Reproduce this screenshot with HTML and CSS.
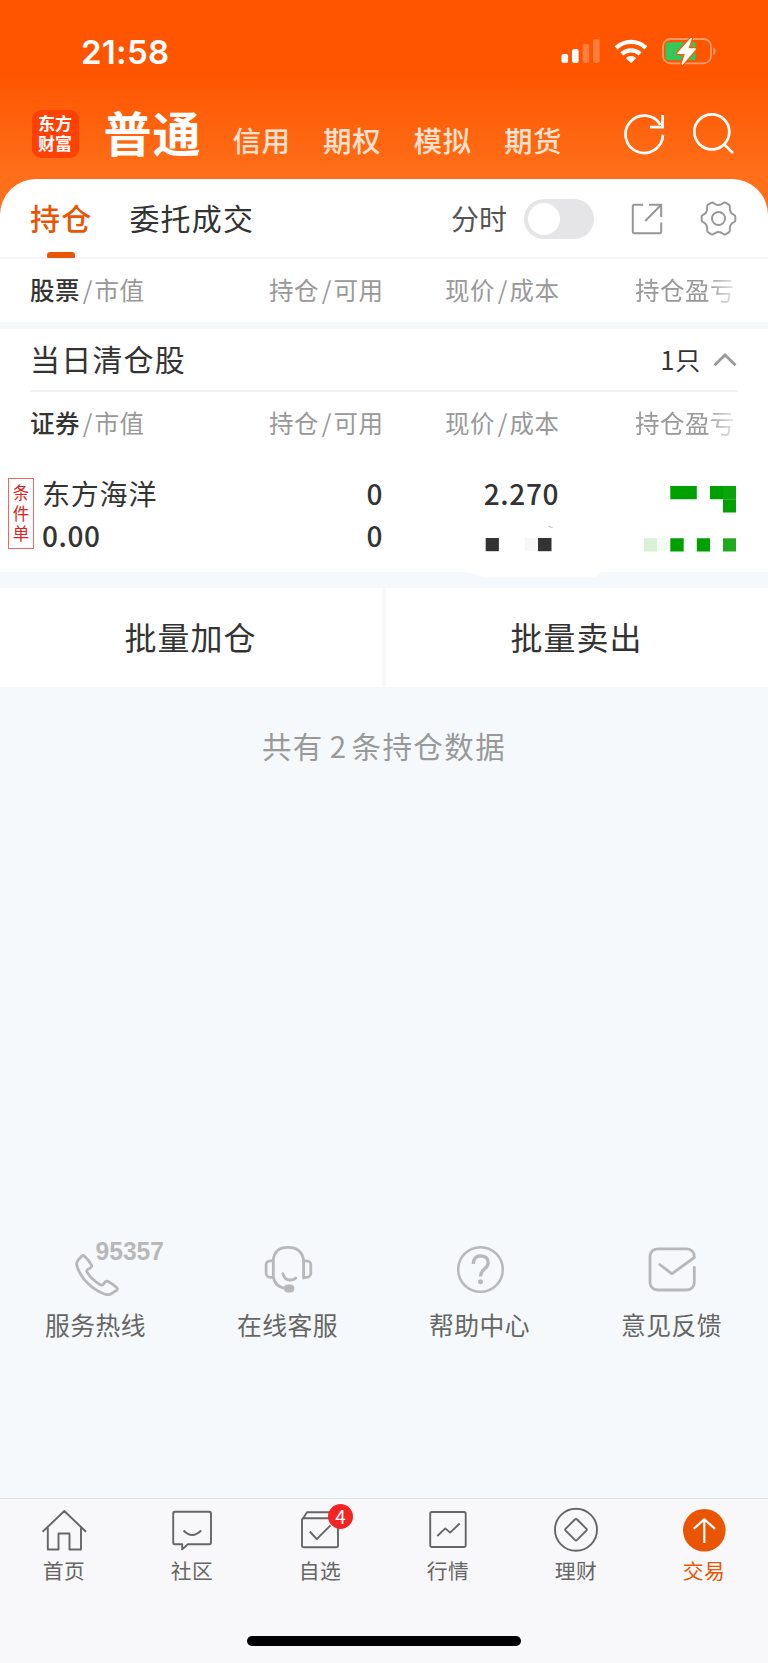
FILE: index.html
```html
<!DOCTYPE html>
<html lang="zh-CN">
<head>
<meta charset="utf-8">
<title>普通交易 - 持仓</title>
<link rel="stylesheet" href="styles.css">
</head>
<body>
<div class="screen">
  <header class="top">
    <div class="status">
      <span class="clock">21:58</span>
      <svg class="status-icons" width="156" height="28" viewBox="0 0 156 28">
        <g fill="#fff">
          <rect x="1.5" y="16" width="6.6" height="9" rx="2"/>
          <rect x="12" y="11" width="6.6" height="14" rx="2"/>
          <g opacity=".24"><rect x="22.6" y="6" width="6.6" height="19" rx="2"/><rect x="33" y="1" width="6.6" height="24" rx="2"/></g>
          <path d="M71 25.2l-5.2-5.1a7.6 7.6 0 0 1 10.4 0z"/>
        </g>
        <g fill="none" stroke="#fff" stroke-width="4.3">
          <path d="M61.8 15.9a13.6 13.6 0 0 1 18.4 0"/>
          <path d="M56.1 9.9a21.6 21.6 0 0 1 29.8 0"/>
        </g>
        <rect x="103" y="1" width="48" height="24.4" rx="7.5" fill="none" stroke="#fff" stroke-opacity=".42" stroke-width="1.8"/>
        <path d="M153.3 9.4c3 .9 3 6.7 0 7.6z" fill="#fff" opacity=".45"/>
        <path d="M109 4.200h26.500v18H109a3.500 3.500 0 0 1-3.500-3.500v-11a3.500 3.500 0 0 1 3.500-3.500z" fill="#34c759"/>
        <path d="M131.200 .4L118 15.200h7.800L122.200 26.200L135.200 11h-7.800z" fill="none" stroke="#ff5a05" stroke-width="4" stroke-linejoin="round"/>
        <path d="M131.200 .4L118 15.200h7.800L122.200 26.200L135.200 11h-7.800z" fill="#fff" stroke="#fff" stroke-width="1.400" stroke-linejoin="round"/>
      </svg>
    </div>
    <div class="account">
      <div class="logo">东方<br>财富</div>
      <h1 class="account-current">普通</h1>
      <nav class="account-tabs"><span>信用</span><span>期权</span><span>模拟</span><span>期货</span></nav>
      <svg class="account-actions" width="112" height="44" viewBox="0 0 112 44" fill="none" stroke="#fff" stroke-width="2.7">
        <path d="M39.900 22.800a18.700 18.700 0 1 1-2.600-10M39.600 3v12.200H27"/>
        <circle cx="88.800" cy="19.800" r="17.500"/><path d="M101 32.200l9 8.900"/>
      </svg>
    </div>
  </header>

  <main class="sheet">
    <div class="tabs">
      <span class="tab tab-active">持仓</span>
      <span class="tab">委托成交</span>
      <span class="minute">分时</span>
      <span class="toggle"><i></i></span>
      <svg class="share" width="32" height="32" viewBox="0 0 32 32" fill="none" stroke="#979797" stroke-width="2">
        <path d="M12.200 1.800H3.300A1.500 1.500 0 0 0 1.800 3.300v25.400a1.500 1.500 0 0 0 1.500 1.500H28.700a1.500 1.500 0 0 0 1.500-1.500V19.500M18 1.800h12.200v12.200M30 2L14.200 18"/>
      </svg>
      <svg class="gear" width="37" height="37" viewBox="0 0 38 38" fill="none" stroke="#979797" stroke-width="2" stroke-linejoin="round">
        <circle cx="19" cy="19" r="6.700"/>
        <path d="M11.400 2.900Q13 2 14.200 3.400Q19 7 23.800 3.400Q25 2 26.600 2.900L29.600 4.700Q31 5.800 30.600 7.400Q30.300 13.400 34.900 15.200Q36.300 15.700 36.300 17.200V20.800Q36.300 22.300 34.900 22.800Q30.300 24.600 30.600 30.600Q31 32.200 29.600 33.300L26.600 35.100Q25 36 23.800 34.600Q19 31 14.200 34.600Q13 36 11.400 35.100L8.400 33.300Q7 32.200 7.400 30.600Q7.700 24.600 3.100 22.800Q1.700 22.300 1.700 20.800V17.200Q1.700 15.700 3.100 15.200Q7.700 13.400 7.400 7.400Q7 5.800 8.400 4.700Z"/>
      </svg>
    </div>
    <div class="columns columns-main">
      <span><b>股票</b><em>/</em>市值</span><span>持仓<em>/</em>可用</span><span>现价<em>/</em>成本</span><span class="fade">持仓盈亏</span>
    </div>
    <section class="cleared">
      <div class="cleared-head">
        <h2>当日清仓股</h2>
        <span class="count">1只</span>
        <svg width="24" height="14" viewBox="0 0 24 14" fill="none" stroke="#999" stroke-width="2.800"><path d="M1.500 12.200L12 2l10.500 10.200"/></svg>
      </div>
      <div class="columns">
        <span><b>证券</b><em>/</em>市值</span><span>持仓<em>/</em>可用</span><span>现价<em>/</em>成本</span><span class="fade">持仓盈亏</span>
      </div>
      <div class="holding">
        <div class="flag">条<br>件<br>单</div>
        <div class="cell name"><span>东方海洋</span><strong>0.00</strong></div>
        <div class="cell num"><strong>0</strong><strong>0</strong></div>
        <div class="cell num">
          <strong>2.270</strong>
          <svg class="mask" width="76" height="28" viewBox="0 0 76 28"><path d="M64.500 1.500l4 1" stroke="#bbb"/><path d="M1.700 13h13.200v13.200H1.700z" fill="#333"/><path d="M41 13h13v13.200H41z" fill="#f7f7f7"/><path d="M54 13h13.500v13.200H54z" fill="#333"/></svg>
        </div>
        <svg class="profit" width="93" height="66" viewBox="0 0 93 66" fill="#00a000">
          <path d="M27.300 0h26.500v13.200H27.300zM67 0h13v13.200H67zM80 13.200h13.100v13.200H80z"/>
          <path d="M80 0h13.100v13.200H80z" fill="#0aa40a"/>
          <path d="M1 52.300h13.200v13.200H1z" fill="#d9f1d9"/><path d="M14.200 52.300h13.100v13.200H14.200z" fill="#f4fbf4"/>
          <path d="M27.300 52.300h13.400v13.200H27.300zM53.800 52.300H67v13.200H53.800z"/>
          <path d="M80 52.300h13.100v13.200H80z" fill="#20aa20"/>
        </svg>
        <svg class="bump" width="134" height="6" viewBox="0 0 134 6"><path d="M0 0Q10 2 18 5Q20 5.600 24 5.600H128Q131 5.600 132 1.500Q132.400 .5 134 0z" fill="#fff"/></svg>
      </div>
    </section>
    <div class="batch"><button>批量加仓</button><button>批量卖出</button></div>
    <p class="total">共有<i>2</i>条持仓数据</p>
  </main>

  <section class="services">
    <div class="service">
      <svg width="100" height="64" viewBox="0 0 100 64" fill="none" stroke="#b8b8b8" stroke-width="2.800" stroke-linejoin="round">
        <path d="M38.300 20.100Q37.300 18.800 36 20L31.900 24.300Q30.100 26.500 31.100 30.500Q34.900 42.500 46.500 51.300Q54.500 57.300 61.100 58.600Q63.500 59 65.500 57.700L70.900 54.100Q72.100 53.100 71 51.800Q67 48 61.700 45.300Q60.500 44.700 59.500 45.700L57.100 48.500Q55.900 49.700 54.400 48.800Q45.500 43.300 41.100 36.200Q40.200 34.800 41.500 33.700L45.100 31.300Q46 30.500 45.500 29.200Q42.700 23.700 38.300 20.100Z"/>
        <text class="hotline" x="49.500" y="23.800" textLength="68.500" lengthAdjust="spacingAndGlyphs">95357</text>
      </svg>
      <span>服务热线</span>
    </div>
    <div class="service">
      <svg width="100" height="64" viewBox="0 0 100 64" fill="none" stroke="#b8b8b8" stroke-width="2.800" stroke-linecap="round" stroke-linejoin="round">
        <path d="M35.300 42V24Q36.500 11.300 50 11.300Q63.500 11.300 65.600 24V42M35.300 24.800h-3.200a4 4 0 0 0-4 4v8.500a4 4 0 0 0 4 4h3.200M65.600 24.800h3.200a4 4 0 0 1 4 4v8.500a4 4 0 0 1-4 4h-3.200M35.300 41Q37.500 52 49 52.300M44.800 37.700Q46.500 44 52 44Q56 44 57.700 42"/>
        <rect x="47.500" y="49.800" width="7.500" height="5.400" rx="2.700" fill="#b8b8b8"/>
      </svg>
      <span>在线客服</span>
    </div>
    <div class="service">
      <svg width="100" height="64" viewBox="0 0 100 64" fill="none" stroke="#b8b8b8" stroke-width="2.500">
        <circle cx="50.500" cy="33.500" r="22.300"/>
        <path d="M43.300 28Q43.300 19.800 50.800 19.800Q58.200 20.100 58.200 26.800Q58 30.300 54.300 33Q50.500 36.300 50.500 40.500" stroke-width="3.200"/>
        <circle cx="50.500" cy="45.800" r="2.500" fill="#b8b8b8" stroke="none"/>
      </svg>
      <span>帮助中心</span>
    </div>
    <div class="service">
      <svg width="100" height="64" viewBox="0 0 100 64" fill="none" stroke="#b8b8b8" stroke-width="2.800" stroke-linecap="round" stroke-linejoin="round">
        <path d="M72.300 31.500V46.500a7.500 7.500 0 0 1-7.500 7.500H35.500A7.500 7.500 0 0 1 28 46.500V20.400a7.500 7.500 0 0 1 7.500-7.500H64.800a7.500 7.500 0 0 1 7.500 7.500V21.500L49.900 37.800L37.800 28.500"/>
      </svg>
      <span>意见反馈</span>
    </div>
  </section>

  <nav class="bottom">
    <a><svg width="48" height="48" viewBox="0 0 48 48"><path d="M2.600 24.800L24.300 4L46 24.800M7.800 20.500V42.500H18.500V26.500H29.500V42.500H41V20.500"/></svg><span>首页</span></a>
    <a><svg width="48" height="48" viewBox="0 0 48 48"><path d="M7 4.800H41.200a1.800 1.800 0 0 1 1.800 1.800V35.400a1.800 1.800 0 0 1-1.800 1.800H19.800L14.200 42.400V37.200H7A1.800 1.800 0 0 1 5.200 35.400V6.600A1.800 1.800 0 0 1 7 4.800zM15.500 23.500Q24 32.500 33.200 23.500"/></svg><span>社区</span></a>
    <a><svg width="48" height="48" viewBox="0 0 48 48"><path d="M6 13L11 5.300H39L42 8V38.500a1.800 1.800 0 0 1-1.800 1.800H7.800A1.800 1.800 0 0 1 6 38.500V12.500a1.800 1.800 0 0 1 1.800-1.200H42M13.800 24.500L20.700 32.200L34.500 18.300"/></svg><i class="badge">4</i><span>自选</span></a>
    <a><svg width="48" height="48" viewBox="0 0 48 48"><rect x="6.200" y="5" width="35.500" height="35" rx="1.800"/><path d="M13.300 29L21.300 21.400L26.100 25.600L35.700 16.500"/></svg><span>行情</span></a>
    <a><svg width="48" height="48" viewBox="0 0 48 48"><circle cx="24" cy="22.700" r="21"/><path d="M22.900 12.500Q24 11.400 25.100 12.500L34.300 21.700Q35.300 22.700 34.300 23.700L25.100 32.900Q24 34 22.900 32.900L13.700 23.700Q12.700 22.700 13.700 21.700Z"/></svg><span>理财</span></a>
    <a class="current"><svg width="48" height="48" viewBox="0 0 48 48"><circle cx="24.300" cy="23.300" r="21.300" fill="#ea5504" stroke="none"/><path d="M24.300 36V13M13.700 21.800L24.300 12.400L35 21.800" stroke="#fff" stroke-width="2.200"/></svg><span>交易</span></a>
    <div class="home-indicator"></div>
  </nav>
</div>
</body>
</html>
```

FILE: styles.css
```css
* { box-sizing: border-box; }
body {
  margin: 0;
  background: #f5f9fb;
  color: #333;
  font-family: "Noto Sans CJK SC", "Noto Sans", sans-serif;
}
svg { display: block; flex: none; }
i, em { font-style: normal; }
h1, h2, p { margin: 0; font-weight: 400; }
.screen { width: 768px; height: 1663px; display: flex; flex-direction: column; }

/* Header */
.top {
  height: 216px;
  flex: none;
  background: linear-gradient(#ff5500 0, #ff5500 72px, #ff6f19 178px);
  color: #fff;
}
.status { display: flex; height: 102px; padding: 38px 52px 0 81px; justify-content: space-between; }
.clock { font: 600 33px/28px Inter, sans-serif; letter-spacing: .3px; }
.account { display: flex; height: 77px; padding: 0 33px 0 31.500px; }
.logo {
  width: 47px; height: 48px; margin-top: 8px; padding-top: 3px;
  border-radius: 9px; background: #ff4105;
  font-size: 17px; font-weight: 700; line-height: 20px; text-align: center;
}
.account-current { margin: 0 0 0 25px; font-size: 48px; font-weight: 700; line-height: 58px; letter-spacing: 1px; width: 129px; }
.account-tabs { display: flex; flex: 1; padding-top: 23px; font-size: 28.500px; line-height: 30px; font-weight: 500; color: #ffe2d0; letter-spacing: .5px; }
.account-tabs span { width: 90.500px; flex: none; }
.account-actions { margin-top: 10px; }

/* Sheet */
.sheet { margin-top: -37px; }
.tabs {
  height: 80px; padding: 1px 30px 0; display: flex; align-items: center;
  background: #fff; border-bottom: 2px solid #f3f5f6; border-radius: 36px 36px 0 0;
}
.tab { position: relative; margin: -3px 37px 0 0; font-size: 30px; line-height: 40px; letter-spacing: 1.200px; }
.tab-active { color: #ea5504; font-weight: 500; }
.tab-active::after { content: ""; position: absolute; left: 17px; bottom: -21px; width: 28px; height: 6px; border-radius: 3px 3px 1px 1px; background: #ea5504; }
.minute { margin: -2px 0 0 auto; font-size: 28px; color: #555; }
.toggle { width: 70px; height: 40px; margin: 0 37px 0 17px; padding: 4px; border-radius: 20px; background: #e5e5e7; }
.toggle i { display: block; width: 32px; height: 32px; border-radius: 50%; background: #fff; }
.share { margin-right: 37px; }
.gear { margin-right: 1px; }

.columns {
  display: grid; grid-template-columns: 239px 176px 190px 103px;
  height: 66px; padding: 0 30px 4px; align-items: center;
  background: #fff; color: #999; font-size: 24.500px; line-height: 32px; letter-spacing: .5px; white-space: nowrap;
}
.columns-main { height: 63px; padding-bottom: 1px; }
.columns b { color: #333; font-weight: 500; }
.columns em { margin: 0 1.600px 0 2.800px; }
.fade { width: 103px; -webkit-mask-image: linear-gradient(90deg, #000 72px, transparent 108px); mask-image: linear-gradient(90deg, #000 72px, transparent 108px); }

.cleared { margin-top: 7px; background: #fff; }
.cleared-head { display: flex; align-items: center; height: 63px; margin: 0 30px; border-bottom: 2px solid #f1f2f3; }
.cleared-head h2 { margin: -3px auto 0 0; font-size: 30px; line-height: 40px; letter-spacing: 1.200px; }
.count { margin: -2px 12px 0 0; font-size: 25px; letter-spacing: .8px; }
.cleared-head svg { margin-right: 1px; }
.holding {
  position: relative; display: grid; grid-template-columns: 34px 230px 111px 176px 184px;
  height: 114px; padding-left: 8px;
}
.flag {
  width: 26px; height: 71px; margin-top: 20px; padding-top: 3px;
  border: 1px solid #e66; color: #e02020; font-size: 16.500px; line-height: 20.700px; text-align: center;
}
.cell { padding-top: 16px; }
.cell span, .cell strong { display: block; height: 42px; line-height: 38px; font-size: 28px; white-space: nowrap; }
.cell span { letter-spacing: .8px; }
.cell strong { font-weight: 500; letter-spacing: .6px; }
.num { text-align: right; }
.mask { margin: 9px 0 0 101px; }
.profit { margin: 28px 0 0 83.500px; }
.bump { position: absolute; left: 466px; top: 114px; }

.batch { display: grid; grid-template-columns: 1fr 1fr; gap: 4px; margin-top: 16px; }
.batch button { height: 99px; border: 0; padding: 0 1px 3px 0; background: #fff; color: #333; font: 400 32px/40px "Noto Sans CJK SC", sans-serif; letter-spacing: 1px; }
.total { margin-top: 38px; text-align: center; font-size: 29.500px; line-height: 40px; color: #999; letter-spacing: 1.400px; }
.total i { margin: 0 4px 0 6px; }

/* Service shortcuts */
.services { display: grid; grid-template-columns: repeat(4, 1fr); margin-top: auto; height: 262px; }
.service { display: flex; flex-direction: column; align-items: center; font-size: 24.800px; line-height: 32px; color: #666; letter-spacing: .5px; }
.service svg { overflow: visible; margin-bottom: 8px; }
.service span { margin-right: 1px; }
.hotline { font: 700 25px "Liberation Sans", sans-serif; fill: #b8b8b8; stroke: none; letter-spacing: 0; }

/* Bottom navigation */
.bottom {
  position: relative; display: grid; grid-template-columns: repeat(6, 1fr);
  height: 165px; flex: none; padding-top: 8px;
  background: #f8f8fa; border-top: 1px solid #dcdfe1; color: #666;
}
.bottom a { position: relative; display: flex; flex-direction: column; align-items: center; }
.bottom a svg { fill: none; stroke: #666; stroke-width: 1.900; stroke-linejoin: round; }
.bottom a span { font-size: 20.800px; line-height: 30px; letter-spacing: .5px; }
.bottom .current { color: #ea5504; }
.badge {
  position: absolute; left: 72px; top: -3px; width: 25px; height: 25px; border-radius: 50%;
  background: #f42424; color: #fff; font-size: 19px; line-height: 24px; text-align: center;
}
.home-indicator { position: absolute; left: 247px; bottom: 17px; width: 274px; height: 10px; border-radius: 5px; background: #000; }
```
